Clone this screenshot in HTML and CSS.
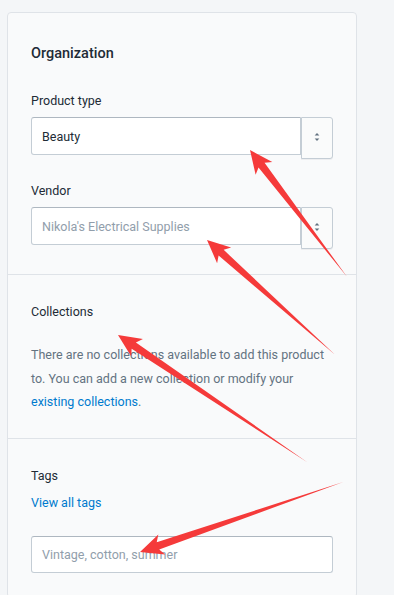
FILE: index.html
```html
<!DOCTYPE html>
<html lang="en">
<head>
    <meta charset="UTF-8">
    <meta name="viewport" content="width=device-width, initial-scale=1.0">
    <title>Organization</title>
    <link rel="stylesheet" href="styles.css">
</head>
<body>
    <div class="card">
        <div class="card-section first">
            <h2 class="card-title">Organization</h2>

            <div class="field">
                <label class="field-label">Product type</label>
                <div class="select-row">
                    <div class="text-input">Beauty</div>
                    <div class="select-button">
                        <svg viewBox="0 0 20 20" width="16" height="16"><path d="M13 8l-3-3-3 3h6zm-.1 4L10 14.9 7.1 12h5.8z"/></svg>
                    </div>
                </div>
            </div>

            <div class="field">
                <label class="field-label">Vendor</label>
                <div class="select-row">
                    <div class="text-input placeholder">Nikola's Electrical Supplies</div>
                    <div class="select-button">
                        <svg viewBox="0 0 20 20" width="16" height="16"><path d="M13 8l-3-3-3 3h6zm-.1 4L10 14.9 7.1 12h5.8z"/></svg>
                    </div>
                </div>
            </div>
        </div>

        <div class="card-section">
            <h3 class="section-title">Collections</h3>
            <p class="help-text">There are no collections available to add this product to. You can add a new collection or modify your <a href="#">existing collections</a>.</p>
        </div>

        <div class="card-section">
            <h3 class="section-title">Tags</h3>
            <a class="tags-link" href="#">View all tags</a>
            <div class="text-input placeholder full">Vintage, cotton, summer</div>
        </div>
    </div>

    <!-- annotation arrows drawn over the screenshot -->
    <svg class="arrows" width="394" height="595" viewBox="0 0 394 595">
        <polygon transform="translate(250 150) rotate(52.6)" points="0,0 23,-10.5 19,-3.8 160,0 19,3.8 23,10.5"/>
        <polygon transform="translate(207 240) rotate(41.9)" points="0,0 23,-10.5 19,-3.8 172,0 19,3.8 23,10.5"/>
        <polygon transform="translate(118 335) rotate(33.9)" points="0,0 23,-10.5 19,-3.8 228,0 19,3.8 23,10.5"/>
        <polygon transform="translate(140 552) rotate(-19)" points="0,0 23,-10.5 19,-3.8 215,0 19,3.8 23,10.5"/>
    </svg>
</body>
</html>
```

FILE: styles.css
```css
html, body {
    margin: 0;
    height: 100%;
    overflow: hidden;
}

body {
    background-color: #f4f6f8;
    font-family: Roboto, "Noto Sans", sans-serif;
    font-size: 12.5px;
    color: #212b36;
    position: relative;
}

.card {
    margin: 12px 0 0 7px;
    width: 350px;
    box-sizing: border-box;
    background-color: #f9fafb;
    border: 1px solid #dfe3e8;
    border-radius: 4px;
}

.card-section {
    padding: 27px 23px 24px;
    border-top: 1px solid #dfe3e8;
}

.card-section.first {
    border-top: none;
    padding-top: 31px;
    padding-bottom: 25px;
}

.card-title {
    margin: 0 0 27px;
    font-size: 14.5px;
    font-weight: 500;
    line-height: 20px;
}

.field + .field {
    margin-top: 22px;
}

.field-label {
    display: block;
    line-height: 20px;
    margin-bottom: 6px;
}

.select-row {
    display: flex;
    align-items: flex-start;
}

.text-input {
    flex: 1;
    height: 38px;
    box-sizing: border-box;
    padding: 0 10px;
    display: flex;
    align-items: center;
    background-color: #fff;
    border: 1px solid #c4cdd5;
    border-top-color: #aeb7c0;
    border-radius: 3px 0 0 3px;
    color: #212b36;
}

.text-input.placeholder {
    color: #919eab;
}

.select-button {
    width: 32px;
    height: 42px;
    box-sizing: border-box;
    display: flex;
    align-items: center;
    justify-content: center;
    background-color: #fafbfb;
    border: 1px solid #c4cdd5;
    border-radius: 0 3px 3px 0;
    box-shadow: 0 1px 0 rgba(22, 29, 37, 0.05);
}

.select-button svg {
    fill: #637381;
    margin-top: -2px;
}

.section-title {
    margin: 0;
    font-size: 12.5px;
    font-weight: 400;
    line-height: 20px;
}

.help-text {
    margin: 21px 0 0;
    line-height: 23.7px;
    color: #637381;
}

a {
    color: #007ace;
    text-decoration: none;
}

.tags-link {
    display: block;
    margin-top: 7px;
    line-height: 20px;
}

.text-input.full {
    margin-top: 23px;
    height: 37px;
    border-radius: 3px;
}

.arrows {
    position: absolute;
    top: 0;
    left: 0;
    pointer-events: none;
    fill: #f53a3a;
}
```
